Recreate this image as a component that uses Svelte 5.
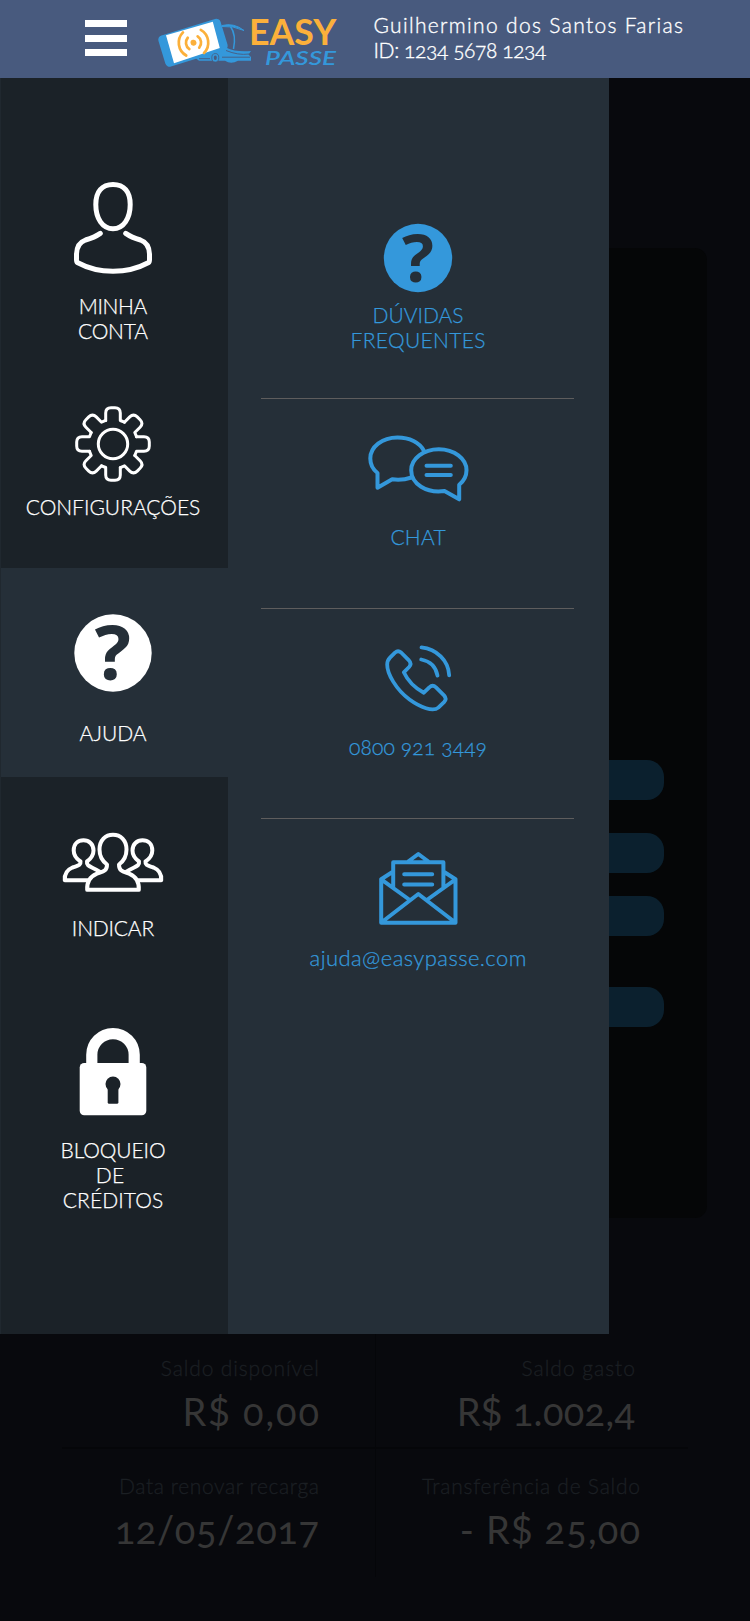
<script>
  const teeth = [0, 45, 90, 135, 180, 225, 270, 315];

  const balances = [
    { label: 'Saldo disponível', currency: 'R$', value: ' 0,00', ls: 0.85, vs: 1.9 },
    { label: 'Saldo gasto', currency: 'R$', value: ' 1.002,4', ls: 1, vs: 0.35 },
    { label: 'Data renovar recarga', currency: '', value: '12/05/2017', ls: 0.6, vs: 0.65 },
    { label: 'Transferência de Saldo', currency: '- R$', value: ' 25,00', ls: 0.75, vs: 1.2 }
  ];
</script>

{#snippet line(text, spacing)}
  <span class="line" style="letter-spacing: {spacing}px; margin-right: {-spacing}px">{text}</span>
{/snippet}

<div class="screen">
  <header>
    <button class="menu" aria-label="Menu"><i></i><i></i><i></i></button>
    <svg class="logo" viewBox="156 14 184 56" width="184" height="56">
      <path d="M222 25.500 Q234 22.500 244 30.500 Q233 25.500 222 26.500 Z" fill="#3498db" stroke="#3498db" stroke-linejoin="round" />
      <path d="M230.500 26.500 Q236.500 35 233.500 49" fill="none" stroke="#3498db" stroke-width="1.500" />
      <path d="M206 54.500 L226 47.500 Q236 52.500 251 51 L248.500 54.500 L251 57 V60.800 H238 Q231 64.500 225 60.800 H199 L195.500 58 Z" fill="#3498db" />
      <path d="M226 50.500 Q238 55.500 249 54 M222 57.200 H250 M199 58.700 H210" fill="none" stroke="#485a7e" stroke-width="0.900" />
      <ellipse cx="215.300" cy="57.800" rx="3.500" ry="4.300" fill="#3498db" stroke="#485a7e" stroke-width="0.800" />
      <ellipse cx="215.300" cy="57.800" rx="1.500" ry="2.200" fill="#485a7e" />
      <rect x="160.500" y="26.500" width="65" height="32.500" rx="4.500" transform="rotate(-17 193 42.800)" fill="#3498db" />
      <path d="M166 35.300 L212.800 21.800 L219.800 48 L174 63.300 Z" fill="#fff" />
      <g transform="rotate(-8 193.500 42.700)" fill="none" stroke="#fbb03b" stroke-width="2.700" stroke-linecap="round">
        <circle cx="193.500" cy="42.700" r="3" fill="#fbb03b" stroke="none" />
        <path d="M188.500 37 A7.600 7.600 0 0 0 188.500 48.400 M198.500 37 A7.600 7.600 0 0 1 198.500 48.400" />
        <path d="M184.500 31 A14.800 14.800 0 0 0 184.500 54.400 M202.500 31 A14.800 14.800 0 0 1 202.500 54.400" />
      </g>
      <text x="249" y="44.500" font-size="35.500" textLength="87.500" lengthAdjust="spacingAndGlyphs" fill="#fbb03b" font-weight="700">EASY</text>
      <text x="265" y="64.500" font-size="20" textLength="71" lengthAdjust="spacingAndGlyphs" fill="#3498db" font-weight="600" font-style="italic">PASSE</text>
    </svg>
    <div class="user">
      <span class="name">Guilhermino dos Santos Farias</span>
      <span class="code">ID: 1234 5678 1234</span>
    </div>
  </header>

  <main>
    <section class="card">
      <i class="pill"></i><i class="pill"></i><i class="pill"></i><i class="pill"></i>
    </section>
    <section class="balances">
      {#each balances as b}
        <div class="balance">
          <small style="letter-spacing: {b.ls}px; margin-right: {-b.ls}px">{b.label}</small>
          <strong style="letter-spacing: {b.vs}px; margin-right: {-b.vs}px"><span class="currency">{b.currency}</span>{b.value}</strong>
        </div>
      {/each}
    </section>
  </main>

  <aside class="drawer">
    <nav>
      <a class="account">
        <svg viewBox="71.500 180 84 96" width="84" height="96" class="outline" stroke-width="5">
          <path d="M113.500 184.400 C102.500 184.400 96.300 191.500 96.300 204.500 C96.300 218.500 103 228.800 113.500 228.800 C124 228.800 130.700 218.500 130.700 204.500 C130.700 191.500 124.500 184.400 113.500 184.400 Z" />
          <path d="M100.800 233.400 Q95 237.500 86 240 Q77.400 243 77 254 V258 Q76.800 262 77.800 262.500 Q94 271.300 113.500 271.300 Q133 271.300 149.200 262.500 Q150.200 262 150 258 V254 Q149.600 243 141 240 Q132 237.500 126.200 233.400" />
        </svg>
        <div class="label">{@render line('MINHA', -0.4)}{@render line('CONTA', -0.2)}</div>
      </a>
      <a class="settings">
        <svg viewBox="-40 -40 80 80" width="80" height="80" class="outline" stroke-width="3">
          {#each teeth as angle}
            <path transform="rotate({angle})" d="M-7.300 -23.500 V-31 Q-7.300 -36.300 -2 -36.300 H2 Q7.300 -36.300 7.300 -31 V-23.500 L11.450 -21.800" />
          {/each}
          <circle r="14.700" />
        </svg>
        <div class="label">{@render line('CONFIGURAÇÕES', 0)}</div>
      </a>
      <a class="help active">
        <svg viewBox="73.500 613 80 80" width="80" height="80">
          <circle cx="113.500" cy="653" r="38.700" fill="#fff" />
          <text class="mark" x="113.500" y="680" font-size="76">?</text>
        </svg>
        <div class="label">{@render line('AJUDA', 0)}</div>
      </a>
      <a class="refer">
        <svg viewBox="61.500 830 104 64" width="104" height="64" class="outline" stroke-width="4">
          <path d="M88 880.300 H65.300 Q64.500 871 73 867.500 C78.500 865.500 81.500 865.500 81 861.500 C76.500 858.500 74.200 854.500 74.200 850.500 C74.200 844 78.500 840.300 84 840.300 C89.500 840.300 94 844 94 850.500 C94 854.500 91.700 858.500 87.500 861.500 C86.500 867 93 866.500 100 871.700" />
          <path d="M139 880.300 H161.700 Q162.500 871 154 867.500 C148.500 865.500 145.500 865.500 146 861.500 C150.500 858.500 152.800 854.500 152.800 850.500 C152.800 844 148.500 840.300 143 840.300 C137.500 840.300 133 844 133 850.500 C133 854.500 135.300 858.500 139.500 861.500 C140.500 867 134 866.500 127 871.700" />
          <path d="M87.700 889.800 H139.300 Q140 878 130 873.800 C123.500 871.500 119.500 871.500 119.500 864.500 C125 860.500 127 855.500 127 849.500 C127 840 121 834.700 113.500 834.700 C106 834.700 100 840 100 849.500 C100 855.500 102 860.500 107.500 864.500 C107.500 871.500 103.500 871.500 97 873.800 Q87 878 87.700 889.800 Z" />
        </svg>
        <div class="label">{@render line('INDICAR', -0.2)}</div>
      </a>
      <a class="block">
        <svg viewBox="78.500 1028 70 88" width="70" height="88">
          <path d="M92.300 1066 V1054.800 A21.200 21.200 0 0 1 134.700 1054.800 V1066" fill="none" stroke="#fff" stroke-width="11.200" />
          <rect x="80.200" y="1063" width="66.600" height="52.200" rx="4.500" fill="#fff" />
          <circle cx="113.500" cy="1084" r="7.500" fill="#1b2228" />
          <rect x="108.200" y="1085" width="10.700" height="18.800" rx="1.500" fill="#1b2228" />
        </svg>
        <div class="label">{@render line('BLOQUEIO', -0.1)}{@render line('DE\u00a0', 0.3)}{@render line('CRÉDITOS', 0.1)}</div>
      </a>
    </nav>

    <div class="panel">
      <a class="faq">
        <svg viewBox="382.500 223 70 70" width="70" height="70">
          <circle cx="417.500" cy="258" r="34.200" fill="#3498db" />
          <text class="mark" x="417.500" y="282" font-size="67">?</text>
        </svg>
        <div class="label">{@render line('DÚVIDAS', 0)}{@render line('FREQUENTES', 0.35)}</div>
      </a>
      <a class="chat">
        <svg viewBox="365.500 432 104 72" width="104" height="72" class="outline" stroke-width="4">
          <path d="M423.300 450.600 C419 442.500 409 437.500 397 437.500 C381.500 437.500 369.800 447 369.800 458.500 C369.800 464.500 372.500 469.500 377 473 V487.700 L391.700 479.300 Q401 480.800 411 477.500" />
          <path d="M458.700 484.800 C463.400 481 466 476 466 470.300 C466 458.600 453.600 449.300 438.300 449.300 C423 449.300 410.700 458.600 410.700 470.300 C410.700 484 426 493.500 444 491 L458.700 499.300 Z M426 465.700 H450.300 M426 475 H450.300" />
        </svg>
        <div class="label">{@render line('CHAT', 0.2)}</div>
      </a>
      <a class="phone">
        <svg viewBox="382.500 642 70 74" width="70" height="74" class="outline" stroke-width="3.800">
          <path d="M400.600 652.500 L408.200 660.200 Q411.600 663.800 408.600 667 L403.300 672.300 Q409.500 685.500 423.300 692.700 L428.800 687.300 Q432.200 684.300 435.500 687.300 L443.500 695.300 Q446.500 698.700 443.800 701.800 L437.800 707.600 C432.500 712 420 707.500 409 699.500 C395.500 689.500 386.500 673.500 386.700 664.500 Q386.700 660.500 389.500 657.600 L394.500 652.600 Q397.500 650 400.600 652.500 Z" />
          <path d="M421 647.400 C436 649 448 660.500 448.700 675.300 M420.700 659.500 Q434.500 662 437 675.700" />
        </svg>
        <div class="label">{@render line('0800 921 3449', 0.15)}</div>
      </a>
      <a class="mail">
        <svg viewBox="377.500 850 80 78" width="80" height="78" class="outline" stroke-width="4">
          <path d="M380.700 879.300 V922.700 H455 V879.300 L426.300 900 M380.700 879.300 L409.300 900 M380.700 879.300 L392.700 871.500 M455 879.300 L442.900 871.500 M392.700 886.700 V862.300 H442.900 V886.700 M407.700 861.500 L417.800 854 L427.900 861.500 M381.500 922 L417.800 894 L454.200 922 M403.700 874.200 H431.700 M403.700 884.500 H431.700" />
        </svg>
        <div class="label email">{@render line('ajuda@easypasse.com', 0.42)}</div>
      </a>
    </div>
  </aside>
</div>

<style>
  :global(body) { margin: 0; background: #08090d; }
  .screen {
    position: relative;
    width: 750px;
    height: 1621px;
    overflow: hidden;
    display: flex;
    flex-direction: column;
    background: #08090d;
    font-family: Lato, "Open Sans", sans-serif;
    font-weight: 300;
    font-feature-settings: "onum";
  }
  header {
    box-sizing: border-box;
    height: 78px;
    display: flex;
    align-items: flex-start;
    padding-left: 84.5px;
    background: #485a7e;
    color: #fff;
  }
  .menu {
    display: flex;
    flex-direction: column;
    gap: 7.7px;
    width: 42.5px;
    margin: 20px 29px 0 0;
    padding: 0;
    border: 0;
    background: none;
  }
  .menu i { height: 7px; background: #fff; }
  .logo { margin-top: 14px; flex: none; }
  svg { overflow: visible; }
  .user {
    display: flex;
    flex-direction: column;
    margin: 12px 0 0 33.5px;
    font-size: 21px;
    line-height: 25px;
    white-space: nowrap;
    -webkit-text-stroke: 0.35px currentColor;
  }
  .name { letter-spacing: 1.33px; }
  .code { letter-spacing: -0.4px; }
  main { flex: 1; display: flex; flex-direction: column; }
  .card {
    box-sizing: border-box;
    width: 664px;
    height: 970px;
    margin: 170px 0 0 43px;
    padding: 512px 43px 0;
    border-radius: 12px;
    background: #050607;
  }
  .pill {
    display: block;
    height: 40px;
    border-radius: 17px;
    background: #0b202e;
  }
  .pill:nth-child(2) { margin-top: 33px; }
  .pill:nth-child(3) { margin-top: 23px; }
  .pill:nth-child(4) { margin-top: 51px; }
  .balances {
    display: grid;
    grid-template-columns: 314px 312px;
    grid-template-rows: 120px 128px;
    margin: 111px 0 0 62px;
  }
  .balance {
    box-sizing: border-box;
    display: flex;
    flex-direction: column;
    align-items: flex-end;
    padding: 26px 56px 0 0;
    white-space: nowrap;
    color: #1b1f23;
    -webkit-text-stroke: 0.3px currentColor;
  }
  .balance:nth-child(odd) { border-right: 1px solid #050609; }
  .balance:nth-child(-n + 2) { border-bottom: 2px solid #050609; }
  .balance:nth-child(2) { padding-right: 53px; }
  .balance:nth-child(n + 3) { padding-top: 24px; }
  .balance:nth-child(4) { padding-right: 48px; }
  .balance small { font-size: 21px; line-height: 25px; }
  .balance strong {
    margin-top: 8px;
    font-size: 38px;
    line-height: 46px;
    font-weight: 400;
    color: #363636;
    -webkit-text-stroke: 0;
    white-space: pre;
  }
  .currency { font-feature-settings: "lnum"; }
  .drawer {
    position: absolute;
    top: 78px;
    left: 0;
    width: 609px;
    height: 1256px;
    display: flex;
    background: #252f38;
    text-align: center;
  }
  nav {
    box-sizing: border-box;
    width: 228px;
    padding-right: 3px;
    border-left: 1px solid #20282f;
    background: #1b2228;
    color: #fff;
    display: flex;
    flex-direction: column;
  }
  a {
    box-sizing: border-box;
    display: flex;
    flex-direction: column;
    align-items: center;
    justify-content: space-between;
  }
  a svg { flex: none; }
  .label { display: flex; flex-direction: column; align-items: center; }
  .line {
    font-size: 21px;
    line-height: 25px;
    white-space: pre;
    -webkit-text-stroke: 0.25px currentColor;
  }
  .email .line { font-size: 22px; }
  .outline { fill: none; stroke: currentColor; stroke-linecap: round; stroke-linejoin: round; }
  .mark { font-family: "Open Sans", sans-serif; font-weight: 700; text-anchor: middle; fill: #252f38; }
  .account { height: 265px; padding-top: 102px; }
  .settings { height: 176px; padding-top: 61px; margin-bottom: 49px; }
  .help { height: 209px; padding: 45px 3px 32px 0; margin-right: -3px; background: #252f38; }
  .refer { height: 163px; padding-top: 53px; }
  .block { height: 272px; padding-top: 88px; }
  .panel {
    box-sizing: border-box;
    width: 313px;
    margin-left: 33px;
    color: #3498db;
    display: flex;
    flex-direction: column;
  }
  .panel .label { margin-left: 1px; }
  .panel a + a { border-top: 1px solid #5e5d5d; }
  .faq { height: 320px; padding: 145px 0 46px; }
  .chat { height: 210px; padding: 33px 0 59px; }
  .phone { height: 210px; padding: 33px 0 59px; }
  .mail { height: 210px; padding: 31px 0 58px; }
</style>
